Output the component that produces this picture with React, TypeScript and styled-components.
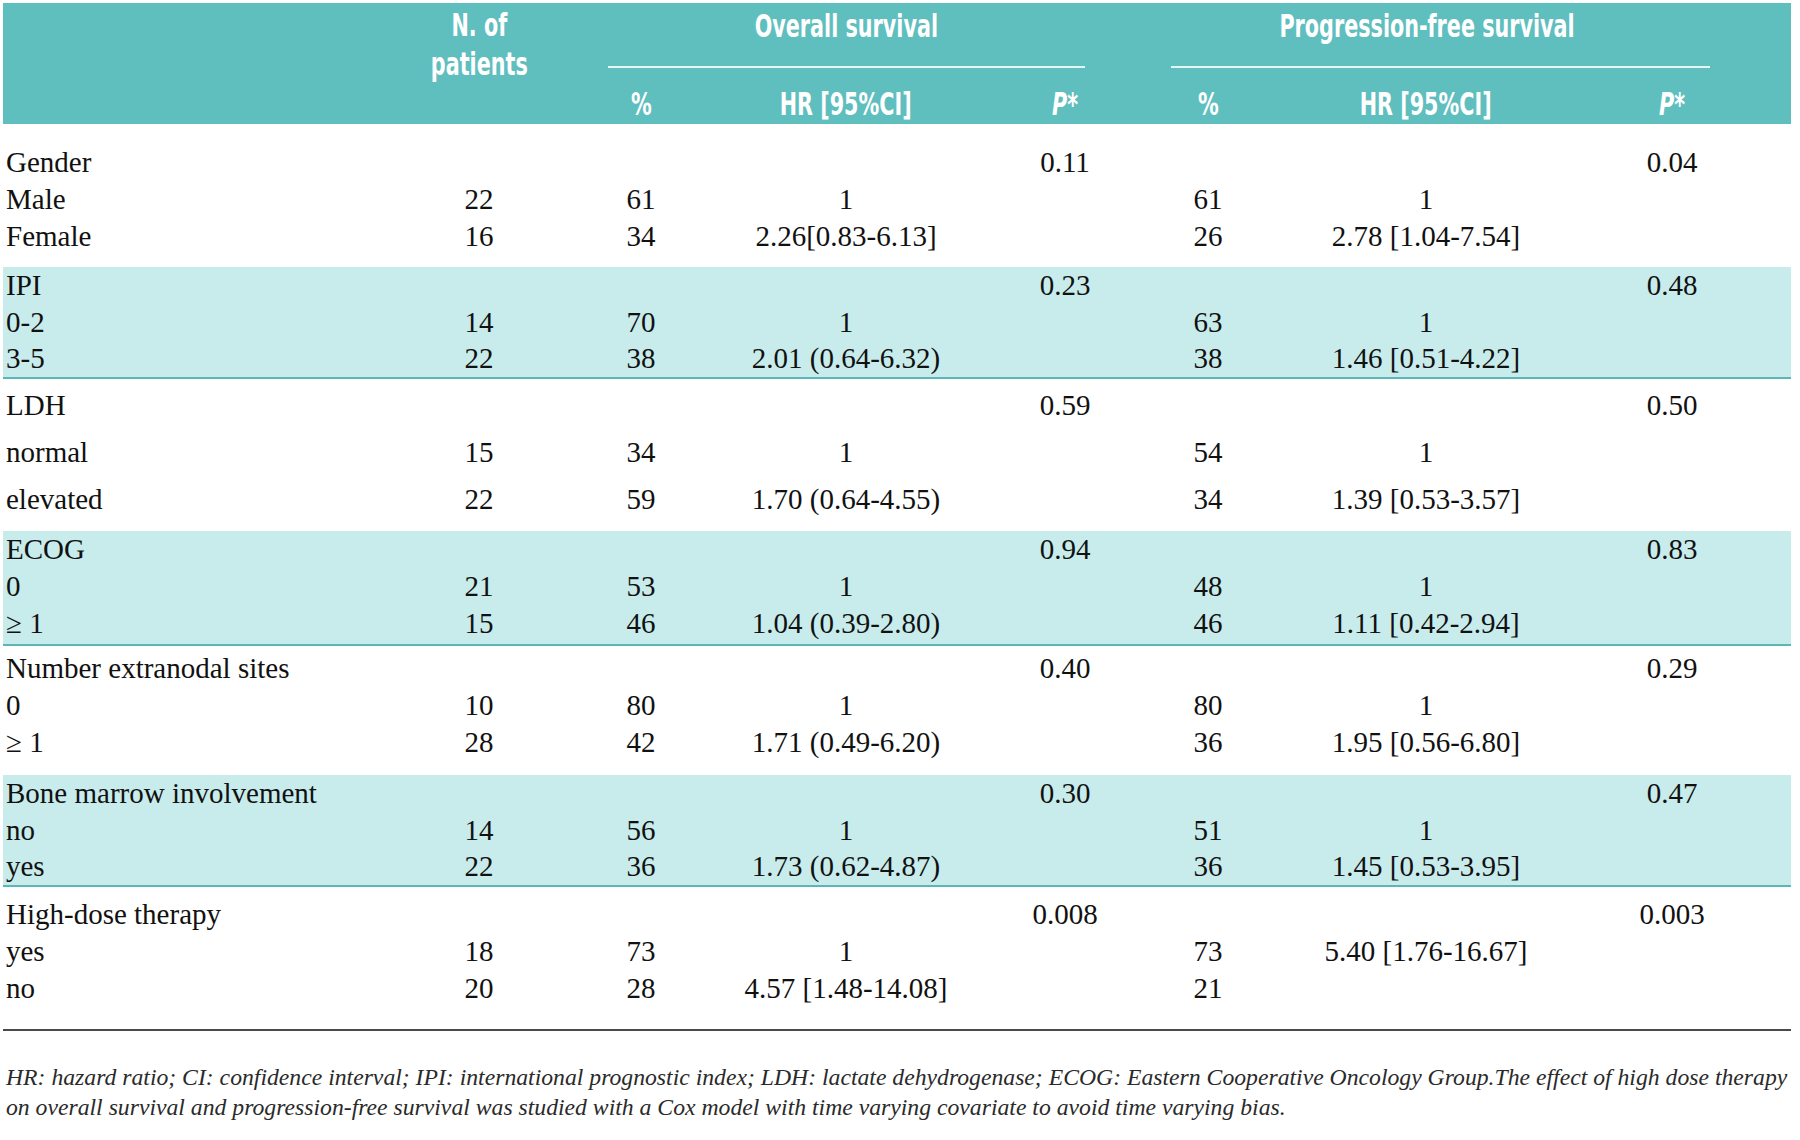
import React from 'react';
import styled, { createGlobalStyle } from 'styled-components';

const GlobalStyle = createGlobalStyle`
  html, body {
    margin: 0;
    padding: 0;
    background: #fff;
  }
  body {
    font-family: "Liberation Serif", "Times New Roman", serif;
    color: #111;
  }
`;

// label, N, OS %, OS HR, OS P, PFS %, PFS HR, PFS P, right pad
const COLUMNS = '397px 158px 166px 244px 194px 92px 344px 148px 1fr';

const Page = styled.div`
  width: 1788px;
  padding: 3px 9px 0 3px;
`;

const Header = styled.div`
  display: grid;
  grid-template-columns: ${COLUMNS};
  grid-template-rows: 65px 56px;
  background: #5fbebe;
  color: #fff;
  font-family: "Liberation Sans Narrow", "DejaVu Sans Condensed", "Liberation Sans", sans-serif;
  font-stretch: condensed;
  font-weight: 700;
  font-size: 32px;
`;

// the journal face is a heavy, very narrow grotesque
const HeadText = styled.span`
  display: inline-block;
  transform: scaleX(0.72);
  transform-origin: center;
  white-space: nowrap;
`;

const PatientsHead = styled.div`
  grid-column: 2;
  grid-row: 1 / 3;
  text-align: center;
  line-height: 39px;
  padding-top: 3px;
`;

const GroupHead = styled.div<{ $col: string; $inset: string }>`
  grid-column: ${({ $col }) => $col};
  grid-row: 1;
  display: flex;
  flex-direction: column;
  margin: ${({ $inset }) => $inset};
`;

const GroupTitle = styled.div<{ $shift?: number }>`
  padding-top: 5px;
  line-height: 36px;
  text-align: center;
  padding-right: ${({ $shift }) => $shift ?? 0}px;
`;

const GroupRule = styled.div`
  margin-top: auto;
  height: 2px;
  background: #e4f5f5;
`;

const HeadCell = styled.div<{ $col: number }>`
  grid-column: ${({ $col }) => $col};
  grid-row: 2;
  text-align: center;
  padding-top: 15px;
  line-height: 42px;
`;

const Group = styled.div<{ $shaded?: boolean; $pad: string }>`
  background: ${({ $shaded }) => ($shaded ? '#c8ecec' : '#fff')};
  border-bottom: ${({ $shaded }) => ($shaded ? '2px solid #5ab7b7' : 'none')};
  padding: ${({ $pad }) => $pad};
`;

const Row = styled.div<{ $h: number }>`
  display: grid;
  grid-template-columns: ${COLUMNS};
  height: ${({ $h }) => $h}px;
  line-height: ${({ $h }) => $h}px;
  font-size: 29px;
  color: #111;
`;

const Label = styled.div`
  padding-left: 3px;
  white-space: nowrap;
`;

const Cell = styled.div`
  text-align: center;
  white-space: nowrap;
`;

const Rule = styled.div`
  height: 2px;
  background: #4a4a4a;
`;

const Footnote = styled.p`
  margin: 31px 0 0 3px;
  font-family: "Liberation Serif", "Times New Roman", serif;
  font-style: italic;
  font-size: 23.7px;
  line-height: 30px;
  color: #2a2a2a;
  white-space: nowrap;
`;

type Line = [string, string?, string?, string?, string?, string?, string?, string?];

type GroupData = {
  shaded?: boolean;
  pad: string;
  h: number;
  lines: Line[];
};

const groups: GroupData[] = [
  {
    pad: '20px 0 12px',
    h: 37,
    lines: [
      ['Gender', '', '', '', '0.11', '', '', '0.04'],
      ['Male', '22', '61', '1', '', '61', '1'],
      ['Female', '16', '34', '2.26[0.83-6.13]', '', '26', '2.78 [1.04-7.54]'],
    ],
  },
  {
    shaded: true,
    pad: '0 0 0.5px',
    h: 36.5,
    lines: [
      ['IPI', '', '', '', '0.23', '', '', '0.48'],
      ['0-2', '14', '70', '1', '', '63', '1'],
      ['3-5', '22', '38', '2.01 (0.64-6.32)', '', '38', '1.46 [0.51-4.22]'],
    ],
  },
  {
    pad: '3px 0 8px',
    h: 47,
    lines: [
      ['LDH', '', '', '', '0.59', '', '', '0.50'],
      ['normal', '15', '34', '1', '', '54', '1'],
      ['elevated', '22', '59', '1.70 (0.64-4.55)', '', '34', '1.39 [0.53-3.57]'],
    ],
  },
  {
    shaded: true,
    pad: '0 0 2px',
    h: 37,
    lines: [
      ['ECOG', '', '', '', '0.94', '', '', '0.83'],
      ['0', '21', '53', '1', '', '48', '1'],
      ['\u2265 1', '15', '46', '1.04 (0.39-2.80)', '', '46', '1.11 [0.42-2.94]'],
    ],
  },
  {
    pad: '4px 0 14px',
    h: 37,
    lines: [
      ['Number extranodal sites', '', '', '', '0.40', '', '', '0.29'],
      ['0', '10', '80', '1', '', '80', '1'],
      ['\u2265 1', '28', '42', '1.71 (0.49-6.20)', '', '36', '1.95 [0.56-6.80]'],
    ],
  },
  {
    shaded: true,
    pad: '0 0 0.5px',
    h: 36.5,
    lines: [
      ['Bone marrow involvement', '', '', '', '0.30', '', '', '0.47'],
      ['no', '14', '56', '1', '', '51', '1'],
      ['yes', '22', '36', '1.73 (0.62-4.87)', '', '36', '1.45 [0.53-3.95]'],
    ],
  },
  {
    pad: '9px 0 22px',
    h: 37,
    lines: [
      ['High-dose therapy', '', '', '', '0.008', '', '', '0.003'],
      ['yes', '18', '73', '1', '', '73', '5.40 [1.76-16.67]'],
      ['no', '20', '28', '4.57 [1.48-14.08]', '', '21', ''],
    ],
  },
];

const App = (): React.ReactElement => {
  return (
    <Page>
      <GlobalStyle />
      <Header>
        <PatientsHead>
          <HeadText>
            N. of
            <br />
            patients
          </HeadText>
        </PatientsHead>
        <GroupHead $col="3 / 6" $inset="0 77px 0 50px">
          <GroupTitle>
            <HeadText>Overall survival</HeadText>
          </GroupTitle>
          <GroupRule />
        </GroupHead>
        <GroupHead $col="6 / 9" $inset="0 36px 0 9px">
          <GroupTitle $shift={26}>
            <HeadText>Progression-free survival</HeadText>
          </GroupTitle>
          <GroupRule />
        </GroupHead>
        <HeadCell $col={3}>
          <HeadText>%</HeadText>
        </HeadCell>
        <HeadCell $col={4}>
          <HeadText>HR [95%CI]</HeadText>
        </HeadCell>
        <HeadCell $col={5}>
          <HeadText>
            <i>P</i>*
          </HeadText>
        </HeadCell>
        <HeadCell $col={6}>
          <HeadText>%</HeadText>
        </HeadCell>
        <HeadCell $col={7}>
          <HeadText>HR [95%CI]</HeadText>
        </HeadCell>
        <HeadCell $col={8}>
          <HeadText>
            <i>P</i>*
          </HeadText>
        </HeadCell>
      </Header>

      {groups.map((group, gi) => (
        <Group key={gi} $shaded={group.shaded} $pad={group.pad}>
          {group.lines.map((line, li) => (
            <Row key={li} $h={group.h}>
              <Label>{line[0]}</Label>
              {line.slice(1, 8).map((value, ci) => (
                <Cell key={ci}>{value}</Cell>
              ))}
            </Row>
          ))}
        </Group>
      ))}

      <Rule />

      <Footnote>
        HR: hazard ratio; CI: confidence interval; IPI: international prognostic index; LDH: lactate
        dehydrogenase; ECOG: Eastern Cooperative Oncology Group.The effect of high dose therapy
        <br />
        on overall survival and progression-free survival was studied with a Cox model with time varying
        covariate to avoid time varying bias.
      </Footnote>
    </Page>
  );
};

export default App;
